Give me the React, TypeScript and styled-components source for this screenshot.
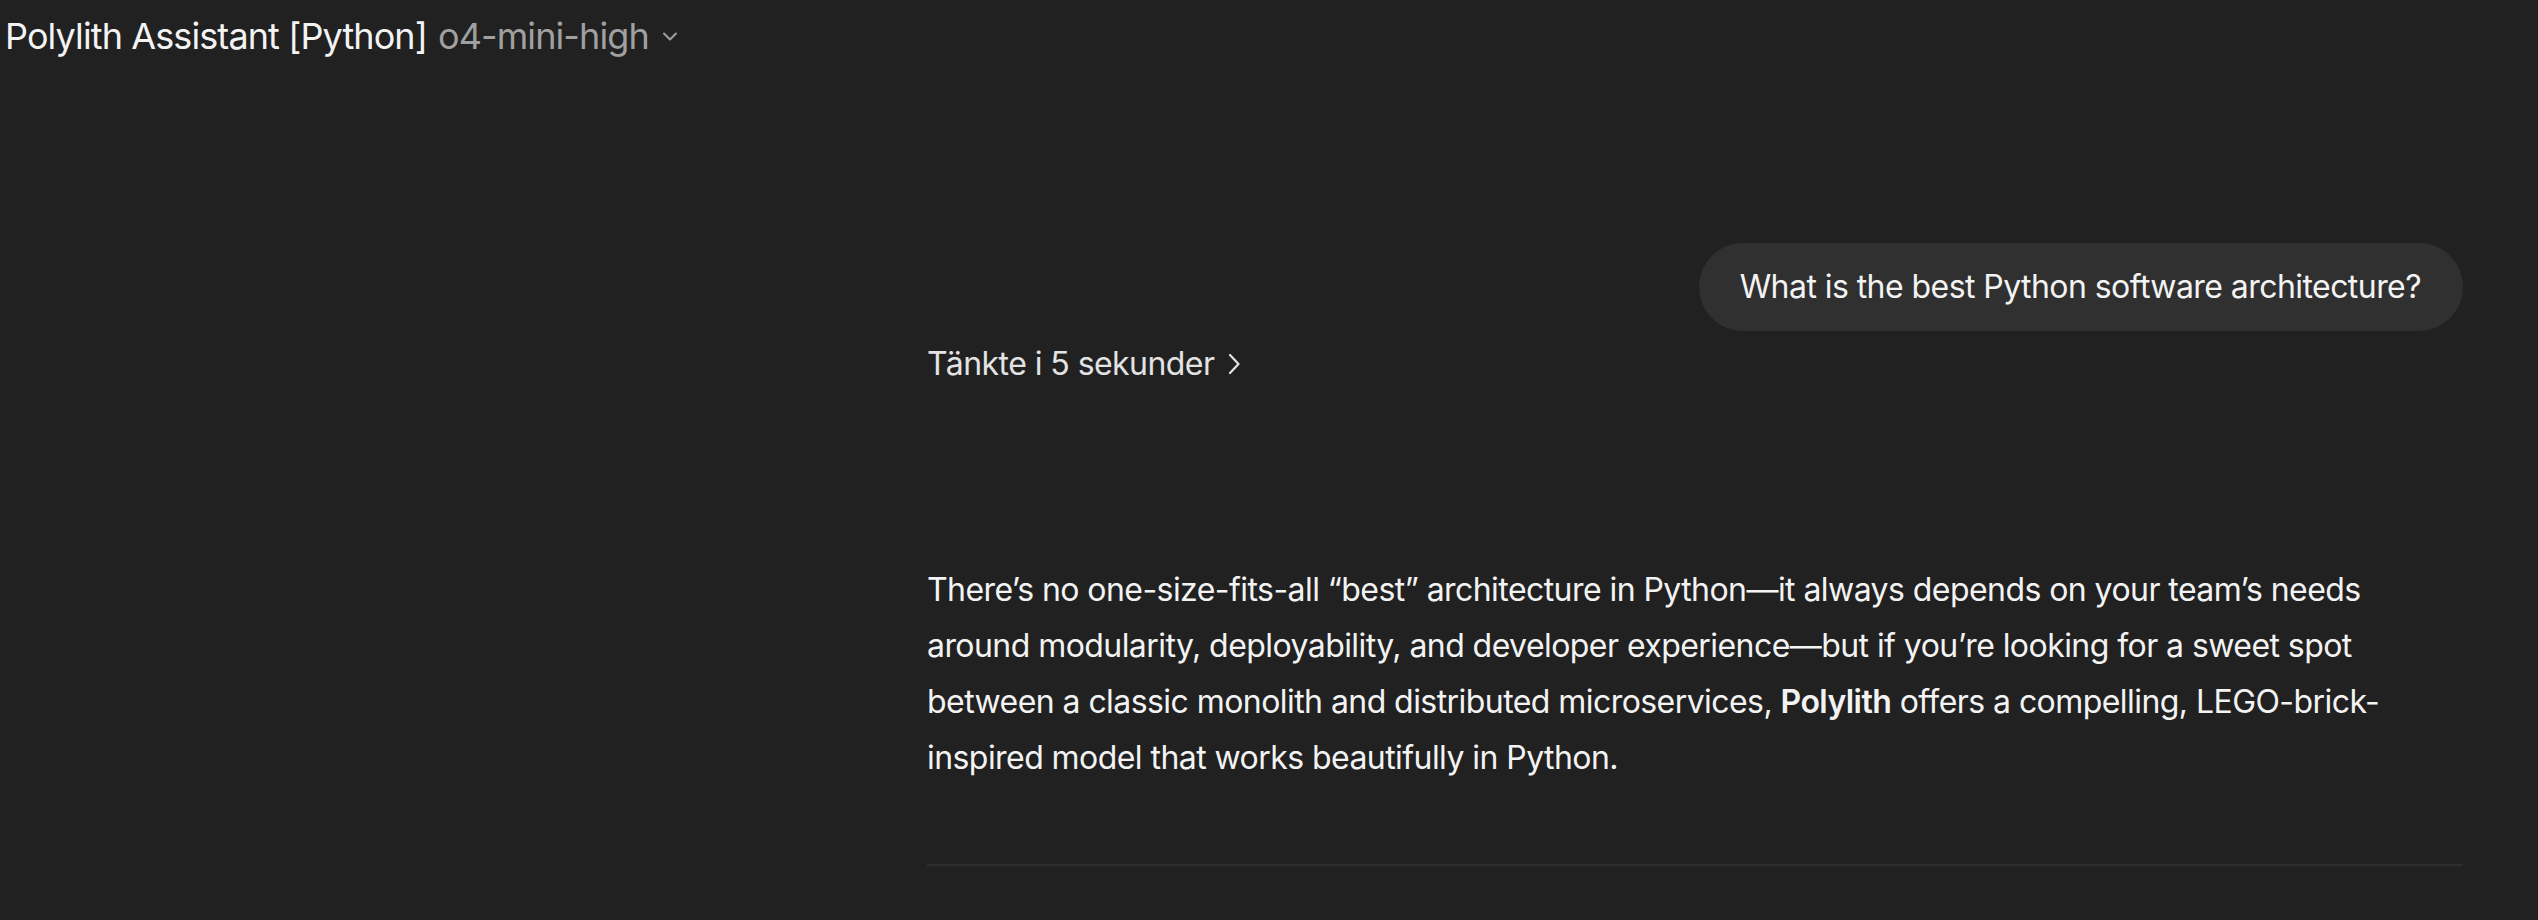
import React from "react";
import styled, { createGlobalStyle } from "styled-components";

const GlobalStyle = createGlobalStyle`
  html, body {
    margin: 0;
    padding: 0;
    background: #212121;
  }
  body {
    font-family: Inter, "Noto Sans", "Liberation Sans", sans-serif;
    color: #ececec;
    -webkit-font-smoothing: antialiased;
  }
  * { box-sizing: border-box; }
`;

const Page = styled.div`
  width: 100%;
  min-height: 920px;
  background: #212121;
  display: flex;
  flex-direction: column;
`;

const Header = styled.header`
  height: 72px;
  display: flex;
  align-items: center;
  padding-left: 5px;
  letter-spacing: -0.056em;
`;

const Title = styled.span`
  font-size: 36px;
  font-weight: 400;
  color: #f3f3f3;
  white-space: nowrap;
`;

const ModelButton = styled.button`
  display: inline-flex;
  align-items: center;
  gap: 13px;
  margin-left: 11px;
  padding: 0;
  border: none;
  background: none;
  font-family: inherit;
  letter-spacing: inherit;
  font-size: 36px;
  color: #a0a0a0;
  cursor: pointer;
`;

const Thread = styled.main`
  display: grid;
  grid-template-columns: 927px 1536px 1fr;
  letter-spacing: -0.035em;
`;

const Column = styled.div`
  grid-column: 2;
  display: flex;
  flex-direction: column;
`;

const UserRow = styled.div`
  display: flex;
  justify-content: flex-end;
  margin-top: 171px;
`;

const Bubble = styled.div`
  background: #303030;
  border-radius: 44px;
  padding: 20px 42px 20px 41px;
  font-size: 32px;
  line-height: 48px;
  color: #f3f3f3;
`;

const Thought = styled.button`
  align-self: flex-start;
  display: inline-flex;
  align-items: center;
  gap: 14px;
  margin-top: 9px;
  padding: 0;
  border: none;
  background: none;
  font-family: inherit;
  letter-spacing: inherit;
  font-size: 32px;
  line-height: 48px;
  color: #e3e3e3;
  cursor: pointer;
`;

const Answer = styled.p`
  margin: 174px 0 0;
  font-size: 32px;
  line-height: 56px;
  color: #f3f3f3;
  strong {
    font-weight: 600;
  }
`;

const Divider = styled.hr`
  margin: 78px 0 0;
  border: none;
  height: 2px;
  background: #2e2e2e;
`;

const ChevronDown = () => (
  <svg width="16" height="10" viewBox="0 0 16 10" fill="none">
    <path d="M2 2.5l6 6 6-6" stroke="#a0a0a0" strokeWidth="2" strokeLinecap="round" strokeLinejoin="round" />
  </svg>
);

const ChevronRight = () => (
  <svg width="12" height="22" viewBox="0 0 12 22" fill="none">
    <path d="M2 2l8.5 9L2 20" stroke="#e3e3e3" strokeWidth="2.2" strokeLinecap="round" strokeLinejoin="round" />
  </svg>
);

export default function App() {
  return (
    <Page>
      <GlobalStyle />
      <Header>
        <Title>Polylith Assistant [Python]</Title>
        <ModelButton>
          o4-mini-high
          <ChevronDown />
        </ModelButton>
      </Header>
      <Thread>
        <Column>
          <UserRow>
            <Bubble>What is the best Python software architecture?</Bubble>
          </UserRow>
          <Thought>
            Tänkte i 5 sekunder
            <ChevronRight />
          </Thought>
          <Answer>
            There’s no one-size-fits-all “best” architecture in Python—it always depends on your team’s needs
            around modularity, deployability, and developer experience—but if you’re looking for a sweet spot
            between a classic monolith and distributed microservices, <strong>Polylith</strong> offers a
            compelling, LEGO-brick-inspired model that works beautifully in Python.
          </Answer>
          <Divider />
        </Column>
      </Thread>
    </Page>
  );
}
